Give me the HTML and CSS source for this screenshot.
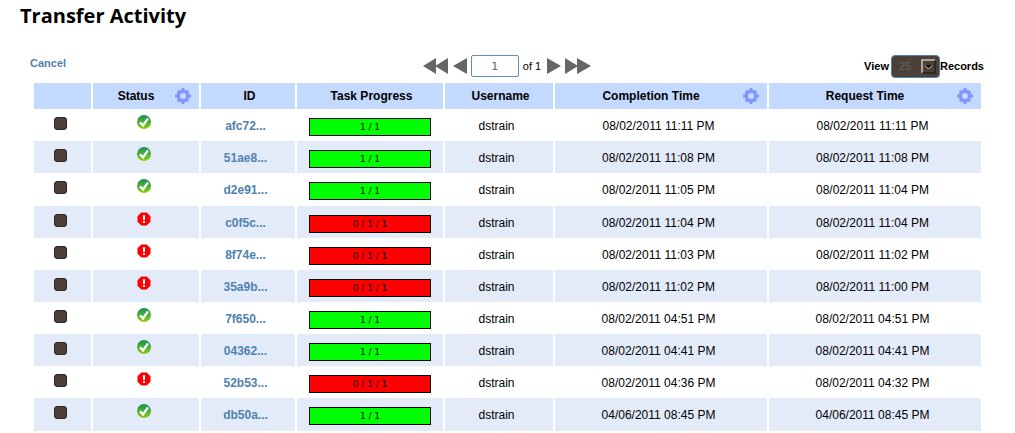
FILE: index.html
```
<!DOCTYPE html>
<html lang="en">
<head>
<meta charset="utf-8">
<title>Transfer Activity</title>
<link rel="stylesheet" href="styles.css">
</head>
<body>
<svg class="symbols" aria-hidden="true">
  <defs>
    <linearGradient id="green" x1="0" y1="0" x2="0" y2="1"><stop offset="0" stop-color="#12935a"/><stop offset="0.5" stop-color="#4fae3c"/><stop offset="1" stop-color="#8fd00c"/></linearGradient>
    <symbol id="ok" viewBox="0 0 14 14"><circle cx="7" cy="7" r="7" fill="url(#green)"/><path d="M3 7.4 6 10.4 11 3.4" fill="none" stroke="#fff" stroke-width="2.3"/></symbol>
    <symbol id="error" viewBox="0 0 14 14"><path d="M4.3 .5h5.4l3.8 3.8v5.4l-3.8 3.8H4.3L.5 9.7V4.3z" fill="#f00"/><path d="M6 3h2v5H6zM6 9h2v2H6z" fill="#fff"/></symbol>
    <symbol id="gear" viewBox="0 0 16 16"><g fill="#8495ff"><path d="M6.6 0h2.8v16H6.6zM0 6.6h16v2.8H0z"/><path d="M6.6 .6h2.8v14.8H6.6zM.6 6.6h14.8v2.8H.6z" transform="rotate(45 8 8)"/></g><circle cx="8" cy="8" r="4.7" fill="#c4d9ff" stroke="#8495ff" stroke-width="3.4"/></symbol>
  </defs>
</svg>
<main class="page">
  <h1 class="title">Transfer Activity</h1>
  <div class="toolbar">
    <a class="cancel" href="#">Cancel</a>
    <nav class="pager" aria-label="Pages">
      <button class="step" aria-label="First page"><svg width="26" height="16"><path d="M0 8 13 0v16zM12 8 25 0v16z"/></svg></button>
      <button class="step" aria-label="Previous page"><svg width="14" height="16"><path d="M0 8 14 0v16z"/></svg></button>
      <input class="page-number" id="page" type="text" value="1" aria-label="Page">
      <label class="total" for="page">of 1</label>
      <button class="step" aria-label="Next page"><svg width="14" height="16"><path d="M14 8 0 0v16z"/></svg></button>
      <button class="step last" aria-label="Last page"><svg width="26" height="16"><path d="M13 8 0 0v16zM26 8 12 0v16z"/></svg></button>
    </nav>
    <div class="view">
      <label for="size">View</label>
      <span class="select-box"><select class="size" id="size"><option>25</option></select><svg class="drop" width="15" height="15"><path d="M0 0h15v15H0z" fill="#302823"/><path d="M0 0h15l-2 2H2v11l-2 2z" fill="#aaa39e"/><path d="M2 2h11v11H2z" fill="#4c4038"/><path d="M4 6h7L7.500 9.500z" fill="#000"/><path d="M4 6.500 7.500 10 11 6.500" fill="none" stroke="#d5d0cc"/></svg></span>
      <span>Records</span>
    </div>
  </div>
  <table class="grid">
    <colgroup><col class="c-check"><col class="c-status"><col class="c-id"><col class="c-task"><col class="c-user"><col><col></colgroup>
    <thead>
      <tr>
        <th></th>
        <th>Status<button class="gear" aria-label="Status options"><svg width="16" height="16"><use href="#gear"/></svg></button></th>
        <th class="plain">ID</th><th class="plain">Task Progress</th><th class="plain">Username</th>
        <th>Completion Time<button class="gear" aria-label="Completion time options"><svg width="16" height="16"><use href="#gear"/></svg></button></th>
        <th>Request Time<button class="gear" aria-label="Request time options"><svg width="16" height="16"><use href="#gear"/></svg></button></th>
      </tr>
    </thead>
    <tbody>
      <tr><td class="check"><input type="checkbox" aria-label="Select afc72"></td><td class="status"><svg width="14" height="14"><use href="#ok"/></svg></td><td><a href="#">afc72...</a></td><td class="task"><div class="bar">1 / 1</div></td><td>dstrain</td><td>08/02/2011 11:11 PM</td><td>08/02/2011 11:11 PM</td></tr>
      <tr><td class="check"><input type="checkbox" aria-label="Select 51ae8"></td><td class="status"><svg width="14" height="14"><use href="#ok"/></svg></td><td><a href="#">51ae8...</a></td><td class="task"><div class="bar">1 / 1</div></td><td>dstrain</td><td>08/02/2011 11:08 PM</td><td>08/02/2011 11:08 PM</td></tr>
      <tr><td class="check"><input type="checkbox" aria-label="Select d2e91"></td><td class="status"><svg width="14" height="14"><use href="#ok"/></svg></td><td><a href="#">d2e91...</a></td><td class="task"><div class="bar">1 / 1</div></td><td>dstrain</td><td>08/02/2011 11:05 PM</td><td>08/02/2011 11:04 PM</td></tr>
      <tr><td class="check"><input type="checkbox" aria-label="Select c0f5c"></td><td class="status"><svg width="14" height="14"><use href="#error"/></svg></td><td><a href="#">c0f5c...</a></td><td class="task"><div class="bar failed">0 / 1 / 1</div></td><td>dstrain</td><td>08/02/2011 11:04 PM</td><td>08/02/2011 11:04 PM</td></tr>
      <tr><td class="check"><input type="checkbox" aria-label="Select 8f74e"></td><td class="status"><svg width="14" height="14"><use href="#error"/></svg></td><td><a href="#">8f74e...</a></td><td class="task"><div class="bar failed">0 / 1 / 1</div></td><td>dstrain</td><td>08/02/2011 11:03 PM</td><td>08/02/2011 11:02 PM</td></tr>
      <tr><td class="check"><input type="checkbox" aria-label="Select 35a9b"></td><td class="status"><svg width="14" height="14"><use href="#error"/></svg></td><td><a href="#">35a9b...</a></td><td class="task"><div class="bar failed">0 / 1 / 1</div></td><td>dstrain</td><td>08/02/2011 11:02 PM</td><td>08/02/2011 11:00 PM</td></tr>
      <tr><td class="check"><input type="checkbox" aria-label="Select 7f650"></td><td class="status"><svg width="14" height="14"><use href="#ok"/></svg></td><td><a href="#">7f650...</a></td><td class="task"><div class="bar">1 / 1</div></td><td>dstrain</td><td>08/02/2011 04:51 PM</td><td>08/02/2011 04:51 PM</td></tr>
      <tr><td class="check"><input type="checkbox" aria-label="Select 04362"></td><td class="status"><svg width="14" height="14"><use href="#ok"/></svg></td><td><a href="#">04362...</a></td><td class="task"><div class="bar">1 / 1</div></td><td>dstrain</td><td>08/02/2011 04:41 PM</td><td>08/02/2011 04:41 PM</td></tr>
      <tr><td class="check"><input type="checkbox" aria-label="Select 52b53"></td><td class="status"><svg width="14" height="14"><use href="#error"/></svg></td><td><a href="#">52b53...</a></td><td class="task"><div class="bar failed">0 / 1 / 1</div></td><td>dstrain</td><td>08/02/2011 04:36 PM</td><td>08/02/2011 04:32 PM</td></tr>
      <tr><td class="check"><input type="checkbox" aria-label="Select db50a"></td><td class="status"><svg width="14" height="14"><use href="#ok"/></svg></td><td><a href="#">db50a...</a></td><td class="task"><div class="bar">1 / 1</div></td><td>dstrain</td><td>04/06/2011 08:45 PM</td><td>04/06/2011 08:45 PM</td></tr>
    </tbody>
  </table>
</main>
</body>
</html>
```
FILE: styles.css
```
* { box-sizing: border-box; }
body { margin: 0; background: #fff; color: #000; font: 12px/16px "Liberation Sans", Arial, sans-serif; }
.symbols { position: absolute; width: 0; height: 0; }
.page { padding: 0 34px; }
.title { margin: 0 0 0 -14px; padding-top: 2px; font: 700 20px/28px "Open Sans", "Noto Sans", sans-serif; color: #000; }
button { padding: 0; border: 0; background: none; cursor: pointer; }
a { color: #4f83ad; font-weight: bold; text-decoration: none; }
svg { display: block; }

.toolbar { display: grid; grid-template-columns: 1fr auto 1fr; align-items: center; height: 24px; margin: 24px -3px 5px -4px; }
.cancel { justify-self: start; padding-bottom: 6px; font-size: 11px; }
.pager { display: flex; align-items: center; gap: 4px; }
.step { fill: #666; }
.page-number { width: 48px; height: 22px; padding: 0; border: 1px solid #5a8fc4; border-radius: 2px; background: #fff; color: #666; font: 11px "DejaVu Sans", sans-serif; text-align: center; }
.total { margin-right: 2px; font-size: 11px; }
.view { display: flex; align-items: center; justify-self: end; font-size: 11px; font-weight: bold; }
.select-box { display: grid; margin-left: 2px; }
.size { grid-area: 1 / 1; width: 49px; height: 23px; padding: 0 0 0 7px; border: 1px solid #4f83ad; border-radius: 4px; appearance: none; background: #4c4038; color: #666; font: 11px "Liberation Sans", Arial, sans-serif; }
.drop { grid-area: 1 / 1; justify-self: end; align-self: center; margin-right: 4px; pointer-events: none; }

.grid { width: 100%; table-layout: fixed; border-collapse: separate; border-spacing: 0; text-align: center; }
.c-check { width: 57px; }
.c-status { width: 108px; }
.c-id { width: 96px; }
.c-task { width: 148px; }
.c-user { width: 110px; }
th, td { padding: 0; }
th + th, td + td { border-left: 2px solid #fff; }
th { position: relative; height: 26px; background: #c4d9ff; }
th:has(.gear) { padding-right: 20px; }
th.plain { padding-left: 3px; }
.gear { position: absolute; top: 5px; right: 8px; }
tbody tr { height: 32px; }
tbody tr:nth-child(7n+3) { height: 33px; }
tbody tr:nth-child(even) td { background: #e3ebf9; }
td { padding: 9px 5px 0 0; vertical-align: top; }
.check, .status, .task { padding: 0; }
.check input { display: block; width: 13px; height: 13px; margin: 8px auto 0 20px; appearance: none; border: 1px solid #2c2521; border-radius: 3px; background: #4c4038; }
.status svg { margin: 6px auto 0 44px; }
.bar { height: 18px; margin: 9px 12px 0; border: 1px solid #000; background: #0f0; font: 9px/17px "DejaVu Sans", sans-serif; }
.failed { background: #f00; }
```
